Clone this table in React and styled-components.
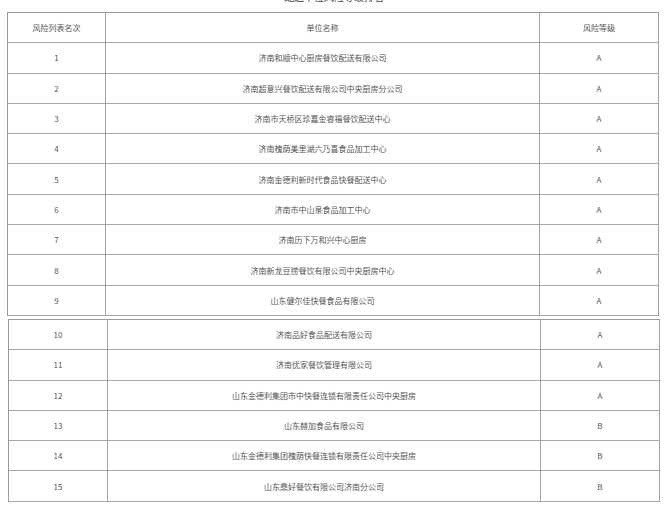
import React from "react";
import styled, { createGlobalStyle } from "styled-components";

const Global = createGlobalStyle`
  html, body { margin: 0; padding: 0; background: #fff; }
  body { font-family: "Noto Sans CJK SC", "Noto Sans", sans-serif; }
`;

const Page = styled.div`
  width: 665px;
  height: 511px;
  overflow: hidden;
  display: flex;
  flex-direction: column;
`;

const TitleBar = styled.div`
  height: 12px;
  overflow: hidden;
  display: flex;
  justify-content: center;
  padding-left: 3px;
`;

const TitleText = styled.div`
  font-size: 10px;
  line-height: 10px;
  margin-top: -8px;
  color: #444;
`;

const Table = styled.div`
  display: grid;
  grid-template-columns: ${(p) => p.$c1}px 1fr 119px;
  grid-auto-rows: 30.3px;
  width: 652px;
  margin-left: ${(p) => p.$left}px;
  margin-top: ${(p) => p.$top}px;
  border-top: 1px solid #999;
  border-left: 1px solid #9a9a9a;
  box-sizing: border-box;
`;

const Cell = styled.div`
  display: flex;
  align-items: center;
  justify-content: center;
  border-right: 1px solid #a0a0a0;
  border-bottom: 1px solid #a8a8a8;
  font-size: 8px;
  color: #555;
  white-space: nowrap;
  box-sizing: border-box;
`;

const top = [
  ["1", "济南和顺中心厨房餐饮配送有限公司", "A"],
  ["2", "济南超意兴餐饮配送有限公司中央厨房分公司", "A"],
  ["3", "济南市天桥区珍嘉金睿福餐饮配送中心", "A"],
  ["4", "济南槐荫美里湖六乃喜食品加工中心", "A"],
  ["5", "济南金德利新时代食品快餐配送中心", "A"],
  ["6", "济南市中山泉食品加工中心", "A"],
  ["7", "济南历下万和兴中心厨房", "A"],
  ["8", "济南新龙豆捞餐饮有限公司中央厨房中心", "A"],
  ["9", "山东健尔佳快餐食品有限公司", "A"],
];

const bottom = [
  ["10", "济南品好食品配送有限公司", "A"],
  ["11", "济南优家餐饮管理有限公司", "A"],
  ["12", "山东金德利集团市中快餐连锁有限责任公司中央厨房", "A"],
  ["13", "山东赫加食品有限公司", "B"],
  ["14", "山东金德利集团槐荫快餐连锁有限责任公司中央厨房", "B"],
  ["15", "山东鼎好餐饮有限公司济南分公司", "B"],
];

const Row = ({ r }) => (
  <>
    <Cell>{r[0]}</Cell>
    <Cell>{r[1]}</Cell>
    <Cell>{r[2]}</Cell>
  </>
);

export default function App() {
  return (
    <Page>
      <Global />
      <TitleBar>
        <TitleText>配送单位风险等级排名</TitleText>
      </TitleBar>
      <Table $c1={98} $left={7} $top={0}>
        <Row r={["风险列表名次", "单位名称", "风险等级"]} />
        {top.map((r) => (
          <Row key={r[0]} r={r} />
        ))}
      </Table>
      <Table $c1={99} $left={8} $top={3}>
        {bottom.map((r) => (
          <Row key={r[0]} r={r} />
        ))}
      </Table>
    </Page>
  );
}
